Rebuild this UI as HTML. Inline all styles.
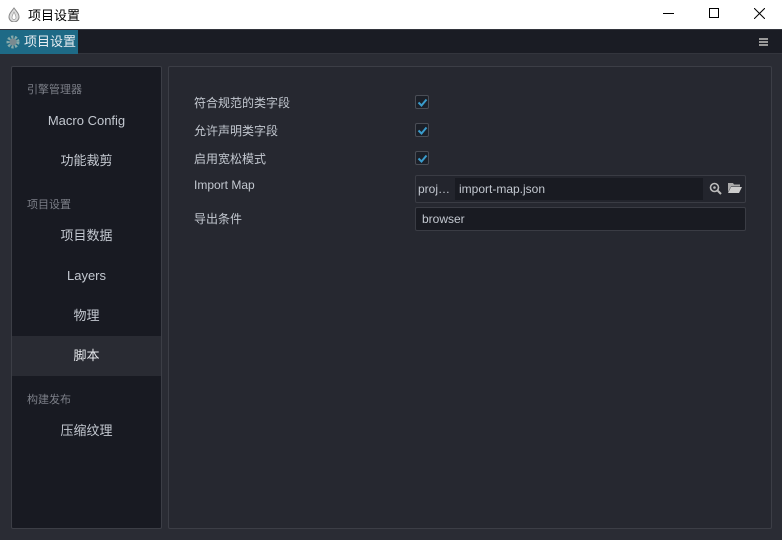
<!DOCTYPE html>
<html><head><meta charset="utf-8"><style>
*{margin:0;padding:0;box-sizing:border-box}
body{width:782px;height:540px;overflow:hidden;background:#2a2c34;font-family:"Liberation Sans","Noto Sans CJK SC",sans-serif;font-size:12px;position:relative}
.tb{position:absolute;left:0;top:0;width:782px;height:29px;background:#fff;color:#000}
.tabs{position:absolute;left:0;top:29px;width:782px;height:25px;background:#1a1c24;border-top:1px solid #33353d;border-bottom:1px solid #33353d}
.tab{position:absolute;left:0;top:0;width:78px;height:24px;background:#1e6a86;color:#e8eef2;font-size:13px;line-height:24px;padding-left:24px}
.side{position:absolute;left:11px;top:66px;width:151px;height:463px;background:#181a22;border:1px solid #3c3e46;border-radius:2px}
.main{position:absolute;left:168px;top:66px;width:604px;height:463px;background:#262830;border:1px solid #3c3e46;border-radius:2px}
.grp{position:absolute;left:15px;color:#7c7f88;font-size:11px}
.it{position:absolute;left:0;width:149px;height:40px;line-height:40px;text-align:center;color:#c3c8d0;font-size:13px}
.lbl{position:absolute;left:194px;color:#c3c8d0;font-size:12px}
.cb{position:absolute;left:415px;width:14px;height:14px;background:#1c2028;border:1px solid #4a4d55;border-radius:2px}
.cb svg{position:absolute;left:1px;top:1px}
</style></head><body>
<div class="tb">
<svg style="position:absolute;left:7px;top:7px" width="14" height="15" viewBox="0 0 14 15"><path d="M7 1C4 5 2 7 2 10a5 5 0 0 0 10 0C12 7 10 5 7 1z" fill="#ddd" stroke="#888"/><path d="M7 5C5.5 8 5 9 5 10.5a2 2 0 0 0 4 0C9 9 8.5 8 7 5z" fill="#fff" stroke="#999" stroke-width=".7"/></svg>
<span style="position:absolute;left:28px;top:5px;font-size:13px">项目设置</span>
<div style="position:absolute;left:663px;top:13px;width:11px;height:1px;background:#000"></div>
<div style="position:absolute;left:709px;top:8px;width:10px;height:10px;border:1px solid #000"></div>
<svg style="position:absolute;left:754px;top:8px" width="11" height="11"><path d="M0 0L11 11M11 0L0 11" stroke="#000" stroke-width="1"/></svg>
</div>
<div class="tabs"><div class="tab"><svg style="position:absolute;left:6px;top:5px" width="14" height="14" viewBox="0 0 14 14"><circle cx="7" cy="7" r="5" fill="none" stroke="#8aa" stroke-width="3" stroke-dasharray="2.2 1.4"/><circle cx="7" cy="7" r="3.5" fill="#7a8a90"/></svg>项目设置</div>
<div style="position:absolute;left:759px;top:8px;width:9px;height:2px;background:#999;box-shadow:0 3px 0 #999,0 6px 0 #999"></div></div>
<div class="side">
<div class="grp" style="top:14px">引擎管理器</div>
<div class="it" style="top:34px">Macro Config</div>
<div class="it" style="top:74px">功能裁剪</div>
<div class="grp" style="top:129px">项目设置</div>
<div class="it" style="top:149px">项目数据</div>
<div class="it" style="top:189px">Layers</div>
<div class="it" style="top:229px">物理</div>
<div class="it" style="top:269px;background:#292b33;color:#e6e8ec">脚本</div>
<div class="grp" style="top:324px">构建发布</div>
<div class="it" style="top:344px">压缩纹理</div>
</div>
<div class="main"></div>
<div class="lbl" style="top:94px">符合规范的类字段</div>
<div class="lbl" style="top:122px">允许声明类字段</div>
<div class="lbl" style="top:150px">启用宽松模式</div>
<div class="lbl" style="top:178px">Import Map</div>
<div class="lbl" style="top:210px">导出条件</div>
<div class="cb" style="top:95px"><svg width="11" height="11"><path d="M1.5 5.5L4.5 8.5L9.5 2.5" stroke="#3a9ccc" stroke-width="2" fill="none"/></svg></div>
<div class="cb" style="top:123px"><svg width="11" height="11"><path d="M1.5 5.5L4.5 8.5L9.5 2.5" stroke="#3a9ccc" stroke-width="2" fill="none"/></svg></div>
<div class="cb" style="top:151px"><svg width="11" height="11"><path d="M1.5 5.5L4.5 8.5L9.5 2.5" stroke="#3a9ccc" stroke-width="2" fill="none"/></svg></div>
<div style="position:absolute;left:415px;top:175px;width:331px;height:28px;background:#23252d;border:1px solid #3a3c44;border-radius:2px">
<span style="position:absolute;left:2px;top:6px;color:#c3c8d0">proj…</span>
<div style="position:absolute;left:39px;top:2px;width:248px;height:22px;background:#191b22;color:#c3c8d0;line-height:22px;padding-left:4px">import-map.json</div>
<svg style="position:absolute;left:293px;top:6px" width="13" height="13"><circle cx="5.5" cy="5.5" r="4" fill="none" stroke="#bbb" stroke-width="1.6"/><circle cx="5.5" cy="5.5" r="1.3" fill="#bbb"/><path d="M8.5 8.5L12 12" stroke="#bbb" stroke-width="2"/></svg>
<svg style="position:absolute;left:312px;top:6px" width="14" height="11"><path d="M0 1h5l1 1.5h6v2H3L0 10z" fill="#aaa"/><path d="M3 5h11l-3 6H0z" fill="#ccc"/></svg>
</div>
<div style="position:absolute;left:415px;top:207px;width:331px;height:24px;background:#191b22;border:1px solid #3a3c44;border-radius:2px;color:#c3c8d0;line-height:22px;padding-left:6px">browser</div>
</body></html>
